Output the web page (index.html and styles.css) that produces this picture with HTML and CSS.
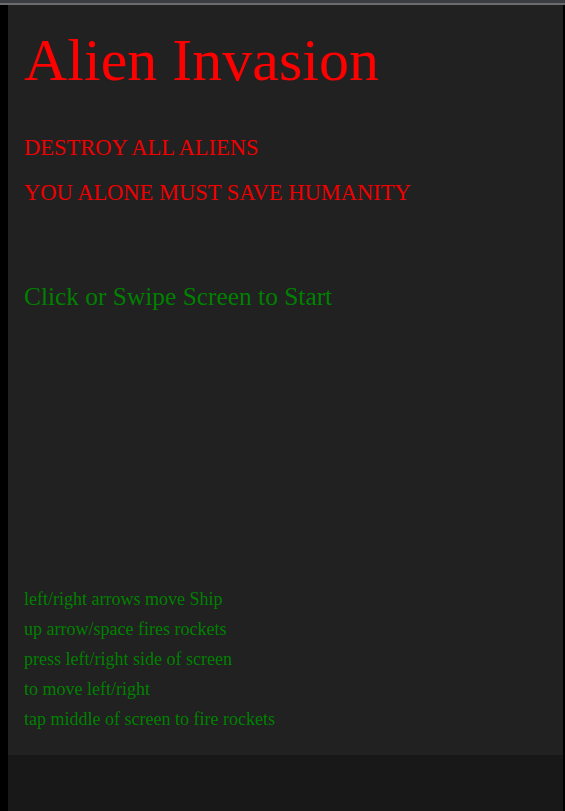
FILE: index.html
```html
<!DOCTYPE html>
<html>
<head>
<meta charset="utf-8">
<link rel="stylesheet" href="styles.css">
</head>
<body>
<div class="topbar"><div class="topbar-dark"></div><div class="topbar-light"></div></div>
<div class="frame">
  <div class="edge-left"></div>
  <div class="column">
    <main class="screen">
      <h1 class="title">Alien Invasion</h1>
      <div class="tagline">
        <p>DESTROY ALL ALIENS</p>
        <p>YOU ALONE MUST SAVE HUMANITY</p>
      </div>
      <p class="start">Click or Swipe Screen to Start</p>
      <div class="help">
        <p>left/right arrows move Ship</p>
        <p>up arrow/space fires rockets</p>
        <p>press left/right side of screen</p>
        <p>to move left/right</p>
        <p>tap middle of screen to fire rockets</p>
      </div>
    </main>
    <div class="below"></div>
  </div>
  <div class="edge-right"></div>
</div>
</body>
</html>
```
FILE: styles.css
```css
html, body {
  margin: 0;
  padding: 0;
  height: 811px;
  overflow: hidden;
  background: #181818;
  font-family: "Times New Roman", "Liberation Serif", Tinos, serif;
}
.topbar { height: 5px; display: flex; flex-direction: column; }
.topbar-dark { height: 3px; background: #3c3c43; }
.topbar-light { height: 2px; background: #6c6c6e; }
.frame { display: flex; height: 806px; }
.edge-left { width: 8px; background: #000; flex: none; }
.edge-right { width: 2px; background: #000; flex: none; }
.column { flex: 1; display: flex; flex-direction: column; }
.screen {
  height: 750px;
  box-sizing: border-box;
  background: #212121;
  padding: 25px 0 0 16px;
}
.below { flex: 1; background: #181818; }
p { margin: 0; }
.title {
  margin: 0;
  font-weight: normal;
  font-size: 60px;
  line-height: 60px;
  color: #ff0000;
}
.tagline {
  margin-top: 35px;
  font-size: 22.5px;
  line-height: 45px;
  color: #ee0000;
}
.start {
  margin-top: 68px;
  font-size: 25.4px;
  line-height: 26px;
  color: #008000;
}
.help {
  margin-top: 275px;
  font-size: 18px;
  line-height: 30px;
  color: #008000;
}
```
